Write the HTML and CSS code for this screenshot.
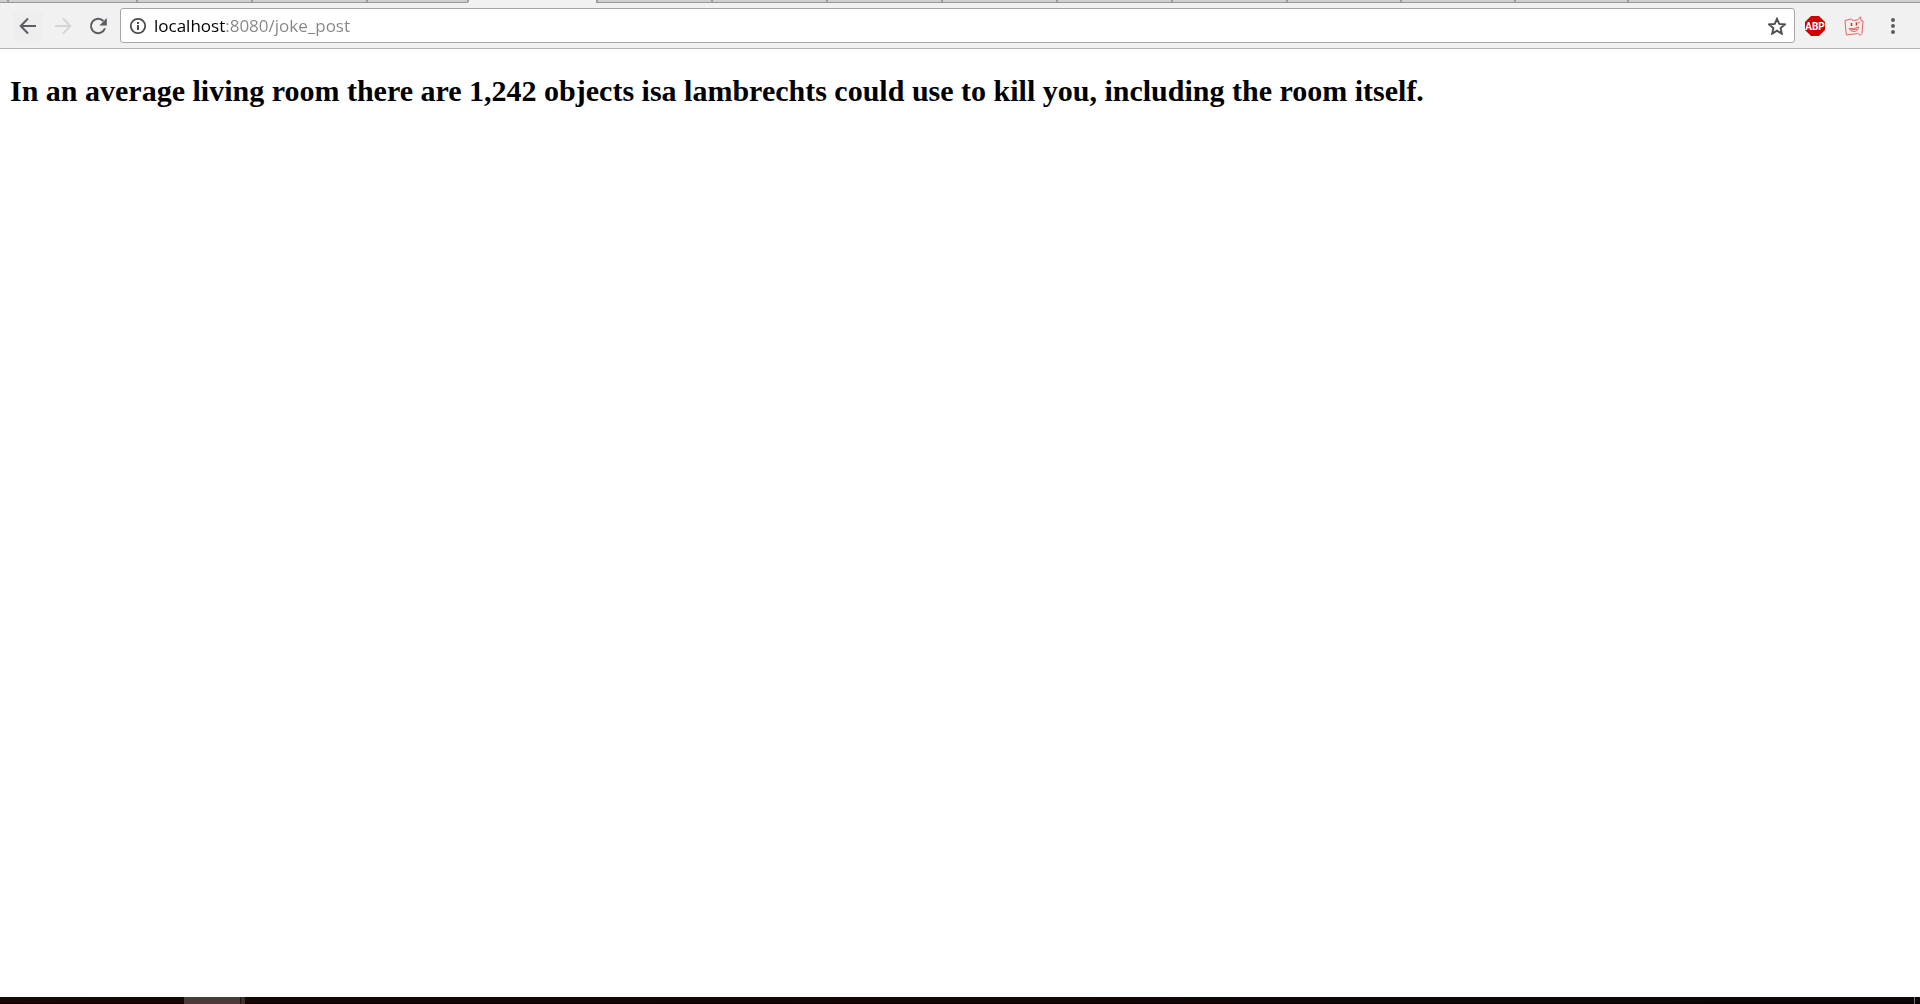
FILE: index.html
```html
<!DOCTYPE html>
<html lang="en">
<head>
<meta charset="utf-8">
<title>localhost:8080/joke_post</title>
<link rel="stylesheet" href="styles.css">
</head>
<body>
<header class="browser">
  <div class="tabs" aria-hidden="true">
    <span class="tab lead" style="flex-basis:7px"></span>
    <span class="tab left" style="flex-basis:129px"></span>
    <span class="tab" style="flex-basis:115px"></span>
    <span class="tab" style="flex-basis:115px"></span>
    <span class="tab" style="flex-basis:101px"></span>
    <span class="tab active" style="flex-basis:129px"></span>
    <span class="tab" style="flex-basis:115px"></span>
    <span class="tab" style="flex-basis:115px"></span>
    <span class="tab" style="flex-basis:115px"></span>
    <span class="tab" style="flex-basis:115px"></span>
    <span class="tab" style="flex-basis:115px"></span>
    <span class="tab" style="flex-basis:115px"></span>
    <span class="tab" style="flex-basis:114px"></span>
    <span class="tab" style="flex-basis:114px"></span>
    <span class="tab" style="flex-basis:113px"></span>
    <span class="tab rest"></span>
  </div>
  <nav class="toolbar">
    <div class="nav-buttons">
      <button class="tool hover" type="button" aria-label="Back">
        <svg width="30" height="30" viewBox="0 0 30 30" fill="none" stroke="#5a5d62" stroke-width="2"><path d="M23 15H8M15 7.5 7.7 15 15 22.5"/></svg>
      </button>
      <button class="tool" type="button" aria-label="Forward" disabled>
        <svg width="30" height="30" viewBox="0 0 30 30" fill="none" stroke="#d4d6d6" stroke-width="2"><path d="M7 15H22M15 7.5 22.3 15 15 22.5"/></svg>
      </button>
      <button class="tool" type="button" aria-label="Reload">
        <svg width="30" height="30" viewBox="0 0 30 30"><path d="M20.4 10A7.2 7.2 0 1 0 22 17.3" fill="none" stroke="#5a5d62" stroke-width="2"/><path d="M23.8 7v7.4h-7.4z" fill="#5a5d62"/></svg>
      </button>
    </div>
    <form class="omnibox">
      <button class="mini" type="button" aria-label="View site information">
        <svg width="18" height="18" viewBox="0 0 18 18"><circle cx="9" cy="9" r="7.2" fill="none" stroke="#4c4c4c" stroke-width="1.8"/><path d="M8 8h2v5H8zM8 5h2v2H8z" fill="#4c4c4c"/></svg>
      </button>
      <input class="url" type="text" aria-label="Address" value="localhost:8080/joke_post" spellcheck="false">
      <button class="mini" type="button" aria-label="Bookmark this page">
        <svg width="18" height="18" viewBox="1 1 16 16"><path d="m9 2.6 2 4.500 5 .5-3.800 3.300 1.100 4.900L9 13.200l-4.300 2.600 1.100-4.900L2 7.600l5-.5z" fill="none" stroke="#4f4f4f" stroke-width="1.700"/></svg>
      </button>
    </form>
    <div class="extensions">
      <button class="ext" type="button" aria-label="Adblock Plus">
        <svg width="20" height="20" viewBox="0 0 20 20"><path d="M6 0h8l6 6v8l-6 6H6l-6-6V6z" fill="#cf0000"/><text class="abp" x="10" y="14" text-anchor="middle">ABP</text></svg>
      </button>
      <button class="ext" type="button" aria-label="Cat extension">
        <svg width="20" height="20" viewBox="0 0 20 20" fill="none" stroke="#e56462" stroke-width="1"><path d="M1 4.500 7 3l2 1.500 4.500-.5L16.500.8l.7 4.200 1.800-.2-1 12.700-1.500 1.800-3-1.800-11 1.500-.7-5z" fill="#f8eded"/><path d="M7.500 7v3M12.500 6.500v3" stroke="#d02a28" stroke-width="1.500"/><path d="M5 12.500q5 1 9.500-1.500-.5 4.500-4.500 4.500-3.500 0-5-3M6.500 14l7-1M14 7l2-1"/></svg>
      </button>
      <button class="ext" type="button" aria-label="Menu">
        <svg width="20" height="20" viewBox="0 0 20 20" fill="#5a5d62"><circle cx="10" cy="4" r="2"/><circle cx="10" cy="10" r="2"/><circle cx="10" cy="16" r="2"/></svg>
      </button>
    </div>
  </nav>
</header>
<main class="page">
  <h2 class="joke">In an average living room there are 1,242 objects isa lambrechts could use to kill you, including the room itself.</h2>
</main>
<footer class="taskbar" aria-hidden="true">
  <span class="task"></span>
  <span class="task-stack"></span>
  <span class="show-desktop"></span>
</footer>
</body>
</html>
```
FILE: styles.css
```css
* { box-sizing: border-box; }

body {
  margin: 0;
  min-height: 100vh;
  display: flex;
  flex-direction: column;
  background: #fff;
  font-family: "Liberation Serif", "Times New Roman", serif;
}

button {
  padding: 0;
  border: 0;
  background: none;
}

svg { display: block; }

.browser {
  background: #f1f1f1;
  border-bottom: 1px solid #b4b4b4;
}

.tabs {
  display: flex;
  height: 3px;
}

.tab {
  flex: 0 1 auto;
  background: #cfcfcf;
  border-bottom: 1px solid #999;
  border-left: 2px solid #9c9c9c;
}

.tab.lead { border-left: 0; }

.tab.active {
  background: #f1f1f1;
  border-bottom-color: #f1f1f1;
}

.tab.rest { flex: 1 1 0; }

.toolbar {
  display: flex;
  align-items: center;
  padding: 5px 17px 5px 13px;
}

.nav-buttons {
  display: flex;
  gap: 5px;
  margin-right: 7px;
}

.tool {
  width: 30px;
  height: 30px;
  border-radius: 3px;
}

.tool.hover { background: #eee; }

.omnibox {
  flex: 1;
  display: flex;
  align-items: center;
  height: 35px;
  padding: 0 8px;
  background: #fff;
  border: 1px solid #a6a6a6;
  border-radius: 3px;
}

.mini {
  width: 18px;
  height: 18px;
}

.url {
  flex: 1;
  min-width: 0;
  height: 32px;
  padding: 0 0 0 7px;
  border: 0;
  outline: 0;
  font: 17px "Open Sans", "Noto Sans", sans-serif;
  color: #000;
  /* host in black, port and path in grey */
  background: linear-gradient(to right, #000 79px, #858585 79px);
  -webkit-background-clip: text;
  background-clip: text;
  -webkit-text-fill-color: transparent;
}

.extensions {
  display: flex;
  gap: 19px;
  margin-left: 10px;
}

.ext {
  width: 20px;
  height: 20px;
}

.abp {
  font: bold 10px "Liberation Sans Narrow", "Roboto", sans-serif;
  fill: #fff;
}

.page {
  flex: 1;
  padding: 0 10px;
}

.joke {
  margin: 25px 0;
  font-size: 30px;
  line-height: 34px;
  color: #000;
}

.taskbar {
  display: flex;
  height: 7px;
  padding: 0 5px 0 184px;
  background: linear-gradient(to right, #170705, #0c0608);
  border-bottom: 1px solid #070004;
}

.task {
  width: 56px;
  height: 7px;
  background: #483b39;
}

.task-stack {
  width: 5px;
  height: 7px;
  background: #3b302e;
  border-left: 1px solid #201513;
}

.show-desktop {
  width: 1px;
  height: 7px;
  margin-left: auto;
  background: #77706f;
}
```
